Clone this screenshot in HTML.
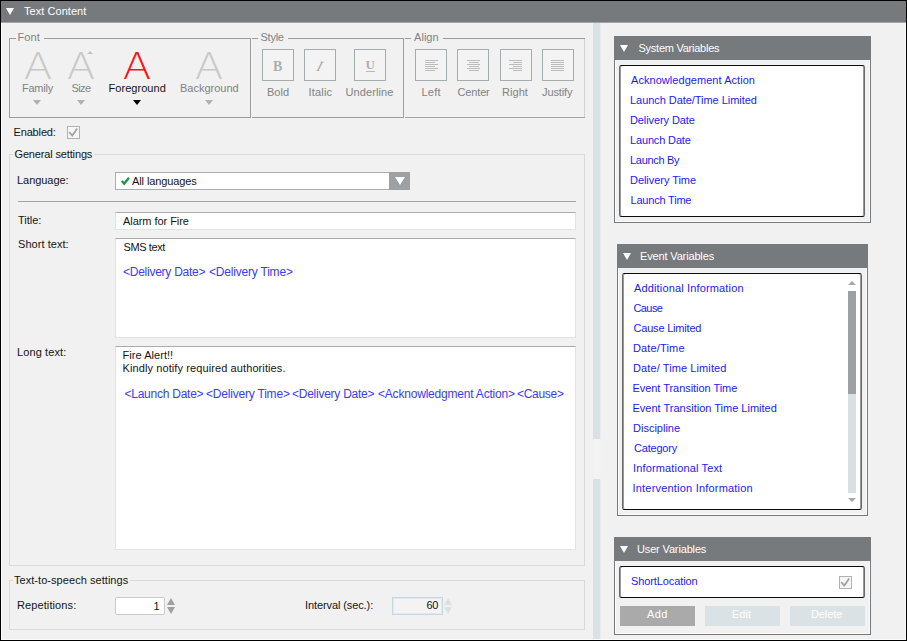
<!DOCTYPE html>
<html><head><meta charset="utf-8"><title>Text Content</title>
<style>
*{box-sizing:border-box;margin:0;padding:0}
html,body{width:907px;height:641px;overflow:hidden;background:#f1f1f1}
body{font-family:"Liberation Sans",sans-serif;font-size:11px;color:#141414;position:relative}
.a{position:absolute}
.t{position:absolute;white-space:nowrap;line-height:14px;font-size:11px}
.g{color:#808284}.k{color:#141414}.w{color:#fff}.l{color:#1a1af0}.b{color:#3a3afa;font-size:12px}
.tri{position:absolute;width:0;height:0;border-left:4.5px solid transparent;border-right:4.5px solid transparent;border-top:7.5px solid #fff}
.ln{position:absolute;background:#9c9c9c}
.btn{position:absolute;width:32px;height:32px;border:1px solid #a6abae;background:#f3f3f3}
.box{position:absolute;background:#fff;border:1px solid #dfe3e6;border-top-color:#a9adb0}
.hd{position:absolute;background:#767a7c}
.pn{position:absolute;border:1px solid #767a7c;box-shadow:inset 0 0 0 1px #fbfbfb}
.lb{position:absolute;background:#fff;border:1px solid #6a6a6a;border-top-color:#0c0c0c;border-bottom-color:#0c0c0c;border-radius:2.5px;box-shadow:inset 1px 0 0 #999,inset -1px 0 0 #999}
.dd{position:absolute;width:0;height:0;border-left:4.5px solid transparent;border-right:4.5px solid transparent;border-top:5px solid #b4b4b4}
.big{position:absolute;font-family:"DejaVu Sans Light","DejaVu Sans","Liberation Sans",sans-serif;font-weight:200;font-size:38px;line-height:44px;width:40px;text-align:center;transform:translateY(-0.4px) scaleX(1.1)}
svg{position:absolute;overflow:visible}
</style></head><body>

<div class="a" style="left:0;top:0;width:907px;height:641px;border:1px solid #000;z-index:9"></div>
<div class="a" style="left:1px;top:1px;width:905px;height:639px;border:1px solid #fbfbfb;border-top:none;z-index:8"></div>
<div class="hd" style="left:1px;top:1px;width:905px;height:21px;z-index:8"></div>
<div class="a" style="left:1px;top:22px;width:905px;height:1px;background:#a3a6a7;z-index:8"></div>
<div class="tri" style="left:6px;top:8px;z-index:10"></div>
<div class="a" style="left:593px;top:23px;width:7px;height:616px;background:#dae1e4"></div>
<div class="a" style="left:600px;top:23px;width:1px;height:616px;background:#e8ecee"></div>
<div class="a" style="left:593px;top:439px;width:8px;height:40px;background:#f3f3f3"></div>
<div class="ln" style="left:9px;top:38px;width:1px;height:80px;background:#9c9c9c"></div>
<div class="ln" style="left:9px;top:38px;width:7px;height:1px;background:#9c9c9c"></div>
<div class="ln" style="left:44px;top:38px;width:207px;height:1px;background:#9c9c9c"></div>
<div class="ln" style="left:9px;top:117px;width:242px;height:1px;background:#9c9c9c"></div>
<div class="ln" style="left:250px;top:38px;width:1px;height:80px;background:#9c9c9c"></div>
<div class="ln" style="left:252px;top:38px;width:6px;height:1px;background:#9c9c9c"></div>
<div class="ln" style="left:288px;top:38px;width:116px;height:1px;background:#9c9c9c"></div>
<div class="ln" style="left:252px;top:117px;width:152px;height:1px;background:#9c9c9c"></div>
<div class="ln" style="left:403px;top:38px;width:1px;height:80px;background:#9c9c9c"></div>
<div class="ln" style="left:405px;top:38px;width:6px;height:1px;background:#9c9c9c"></div>
<div class="ln" style="left:443px;top:38px;width:142px;height:1px;background:#9c9c9c"></div>
<div class="ln" style="left:405px;top:117px;width:180px;height:1px;background:#a6a6a6"></div>
<div class="ln" style="left:584px;top:39px;width:1px;height:78px;background:#d2d2d2"></div>
<div class="big" style="left:17.5px;top:44px;color:#c8c8c8">A</div>
<div class="big" style="left:61px;top:44px;color:#c8c8c8">A</div>
<div class="big" style="left:117.4px;top:44px;color:#ff1212">A</div>
<div class="big" style="left:189.4px;top:44px;color:#c8c8c8">A</div>
<div class="a" style="left:87px;top:51px;width:0;height:0;border-left:3.5px solid transparent;border-right:3.5px solid transparent;border-bottom:3.5px solid #c2c2c2"></div>
<div class="dd" style="left:33px;top:100px;border-top-color:#b2b2b2"></div>
<div class="dd" style="left:76.5px;top:100px;border-top-color:#b2b2b2"></div>
<div class="dd" style="left:133px;top:100px;border-top-color:#000"></div>
<div class="dd" style="left:205px;top:100px;border-top-color:#b2b2b2"></div>
<div class="btn" style="left:262px;top:49px"></div>
<div class="btn" style="left:304px;top:49px"></div>
<div class="btn" style="left:354px;top:49px"></div>
<div class="btn" style="left:415px;top:49px"></div>
<div class="btn" style="left:457px;top:49px"></div>
<div class="btn" style="left:500px;top:49px"></div>
<div class="btn" style="left:542px;top:49px"></div>
<div class="t" style="left:273px;top:59px;font:bold 14px/16px 'Liberation Serif',serif;color:#adadad">B</div>
<div class="t" style="left:317px;top:59px;font:italic 14px/16px 'Liberation Serif',serif;color:#a6a6a6;transform:skewX(-18deg)">I</div>
<div class="t" style="left:365.5px;top:57px;font:bold 13px/16px 'Liberation Serif',serif;color:#b0b0b0">U</div>
<div class="a" style="left:366px;top:71px;width:9px;height:1px;background:#b9b9b9"></div>
<div class="a" style="left:425px;top:60px;width:13px;height:1px;background:#bcbcbc"></div>
<div class="a" style="left:425px;top:62px;width:9.5px;height:1px;background:#bcbcbc"></div>
<div class="a" style="left:425px;top:64px;width:13px;height:1px;background:#bcbcbc"></div>
<div class="a" style="left:425px;top:66px;width:9.5px;height:1px;background:#bcbcbc"></div>
<div class="a" style="left:425px;top:68px;width:13px;height:1px;background:#bcbcbc"></div>
<div class="a" style="left:425px;top:70px;width:9.5px;height:1px;background:#bcbcbc"></div>
<div class="a" style="left:467.0px;top:60px;width:13px;height:1px;background:#bcbcbc"></div>
<div class="a" style="left:468.5px;top:62px;width:10px;height:1px;background:#bcbcbc"></div>
<div class="a" style="left:467.0px;top:64px;width:13px;height:1px;background:#bcbcbc"></div>
<div class="a" style="left:468.5px;top:66px;width:10px;height:1px;background:#bcbcbc"></div>
<div class="a" style="left:467.0px;top:68px;width:13px;height:1px;background:#bcbcbc"></div>
<div class="a" style="left:468.5px;top:70px;width:10px;height:1px;background:#bcbcbc"></div>
<div class="a" style="left:509px;top:60px;width:13px;height:1px;background:#bcbcbc"></div>
<div class="a" style="left:512.5px;top:62px;width:9.5px;height:1px;background:#bcbcbc"></div>
<div class="a" style="left:509px;top:64px;width:13px;height:1px;background:#bcbcbc"></div>
<div class="a" style="left:512.5px;top:66px;width:9.5px;height:1px;background:#bcbcbc"></div>
<div class="a" style="left:509px;top:68px;width:13px;height:1px;background:#bcbcbc"></div>
<div class="a" style="left:512.5px;top:70px;width:9.5px;height:1px;background:#bcbcbc"></div>
<div class="a" style="left:551px;top:60px;width:13px;height:1px;background:#bcbcbc"></div>
<div class="a" style="left:551px;top:62px;width:13px;height:1px;background:#bcbcbc"></div>
<div class="a" style="left:551px;top:64px;width:13px;height:1px;background:#bcbcbc"></div>
<div class="a" style="left:551px;top:66px;width:13px;height:1px;background:#bcbcbc"></div>
<div class="a" style="left:551px;top:68px;width:13px;height:1px;background:#bcbcbc"></div>
<div class="a" style="left:551px;top:70px;width:13px;height:1px;background:#bcbcbc"></div>
<div class="a" style="left:67px;top:126px;width:13px;height:13px;border:1px solid #aeb2b5;background:#f6f6f6"></div>
<svg style="left:67px;top:126px" width="13" height="13" viewBox="0 0 13 13"><path d="M2.2 6.2 L5.3 9.5 L10.2 2.4" fill="none" stroke="#9fa3a5" stroke-width="1.8"/></svg>
<div class="ln" style="left:9px;top:154px;width:1px;height:412px;background:#d9d9d9"></div>
<div class="ln" style="left:9px;top:154px;width:4px;height:1px;background:#d9d9d9"></div>
<div class="ln" style="left:94px;top:154px;width:491px;height:1px;background:#d9d9d9"></div>
<div class="ln" style="left:584px;top:154px;width:1px;height:412px;background:#d9d9d9"></div>
<div class="ln" style="left:9px;top:565px;width:576px;height:1px;background:#d9d9d9"></div>
<div class="a" style="left:115px;top:172px;width:295px;height:18px;background:#fff;border:1px solid #a9adb0"></div>
<div class="a" style="left:389px;top:172px;width:21px;height:18px;background:#9da1a3"></div>
<div class="a" style="left:394.5px;top:177px;width:0;height:0;border-left:5px solid transparent;border-right:5px solid transparent;border-top:8px solid #fff"></div>
<svg style="left:121px;top:177px" width="9" height="8" viewBox="0 0 9 8"><path d="M0.8 4 L3.2 6.6 L8 0.8" fill="none" stroke="#1f9a48" stroke-width="2.4"/></svg>
<div class="ln" style="left:18px;top:201px;width:558px;height:1px;background:#a2a2a2"></div>
<div class="box" style="left:115px;top:212px;width:461px;height:18px"></div>
<div class="box" style="left:115px;top:238px;width:461px;height:100px"></div>
<div class="box" style="left:115px;top:346px;width:461px;height:204px"></div>
<div class="ln" style="left:9px;top:580px;width:1px;height:50px;background:#d9d9d9"></div>
<div class="ln" style="left:9px;top:580px;width:4px;height:1px;background:#d9d9d9"></div>
<div class="ln" style="left:130px;top:580px;width:455px;height:1px;background:#d9d9d9"></div>
<div class="ln" style="left:584px;top:580px;width:1px;height:50px;background:#d9d9d9"></div>
<div class="ln" style="left:9px;top:629px;width:576px;height:1px;background:#d9d9d9"></div>
<div class="a" style="left:115px;top:597px;width:50px;height:18px;background:#fff;border:1px solid #cbcbcb;border-radius:2px"></div>
<div class="a" style="left:392px;top:597px;width:51px;height:18px;background:#f3f3f3;border:1px solid #c6d6e2;box-shadow:inset 0 0 0 1px #e3eaef"></div>
<div class="a" style="left:167px;top:598px;width:0;height:0;border-left:4px solid transparent;border-right:4px solid transparent;border-bottom:7px solid #9da1a3"></div>
<div class="a" style="left:167px;top:607px;width:0;height:0;border-left:4px solid transparent;border-right:4px solid transparent;border-top:7px solid #9da1a3"></div>
<div class="a" style="left:444.2px;top:598px;width:0;height:0;border-left:4px solid transparent;border-right:4px solid transparent;border-bottom:7px solid #d9e1e4"></div>
<div class="a" style="left:444.2px;top:607px;width:0;height:0;border-left:4px solid transparent;border-right:4px solid transparent;border-top:7px solid #d9e1e4"></div>
<div class="pn" style="left:614px;top:36px;width:257px;height:187px"></div>
<div class="hd" style="left:614px;top:36px;width:257px;height:24px"></div>
<div class="tri" style="left:620px;top:45px"></div>
<div class="lb" style="left:619px;top:65px;width:246px;height:152px"></div>
<div class="pn" style="left:617px;top:244px;width:251px;height:272px"></div>
<div class="hd" style="left:617px;top:244px;width:251px;height:24px"></div>
<div class="tri" style="left:623px;top:253px"></div>
<div class="lb" style="left:622px;top:273px;width:240px;height:237px"></div>
<div class="pn" style="left:614px;top:537px;width:257px;height:98px"></div>
<div class="hd" style="left:614px;top:537px;width:257px;height:24px"></div>
<div class="tri" style="left:620px;top:546px"></div>
<div class="lb" style="left:619px;top:566px;width:246px;height:32px"></div>
<div class="a" style="left:848px;top:291px;width:8px;height:202px;background:#d8e0e3"></div>
<div class="a" style="left:848px;top:291px;width:8px;height:103px;background:#9da1a3"></div>
<div class="a" style="left:848px;top:281px;width:0;height:0;border-left:4px solid transparent;border-right:4px solid transparent;border-bottom:4px solid #a4a8aa"></div>
<div class="a" style="left:848px;top:498px;width:0;height:0;border-left:4px solid transparent;border-right:4px solid transparent;border-top:4px solid #a4a8aa"></div>
<div class="a" style="left:839px;top:576px;width:13px;height:13px;border:1px solid #aeb2b5;background:#f6f6f6"></div>
<svg style="left:839px;top:576px" width="13" height="13" viewBox="0 0 13 13"><path d="M2.2 6.2 L5.3 9.5 L10.2 2.4" fill="none" stroke="#9fa3a5" stroke-width="1.8"/></svg>
<div class="a" style="left:620px;top:606px;width:75px;height:20px;background:#aaaaaa"></div>
<div class="a" style="left:705px;top:606px;width:75px;height:20px;background:#dbe2e5"></div>
<div class="a" style="left:790px;top:606px;width:75px;height:20px;background:#dbe2e5"></div>
<div class="t w" style="left:24.0px;top:4px;letter-spacing:0.05px;z-index:10">Text Content</div>
<div class="t g" style="left:17.5px;top:30px;letter-spacing:0.1px">Font</div>
<div class="t g" style="left:260.5px;top:30px;letter-spacing:-0.25px">Style</div>
<div class="t g" style="left:414.0px;top:30px;letter-spacing:0.05px">Align</div>
<div class="t g" style="left:22.0px;top:81px;letter-spacing:-0.25px">Family</div>
<div class="t g" style="left:71.5px;top:81px;letter-spacing:-0.6px">Size</div>
<div class="t k" style="left:108.5px;top:81px;letter-spacing:0.05px">Foreground</div>
<div class="t g" style="left:180.0px;top:81px">Background</div>
<div class="t g" style="left:267.0px;top:85px">Bold</div>
<div class="t g" style="left:308.5px;top:85px;letter-spacing:0.2px">Italic</div>
<div class="t g" style="left:345.5px;top:85px;letter-spacing:0.1px">Underline</div>
<div class="t g" style="left:421.5px;top:85px;letter-spacing:0.25px">Left</div>
<div class="t g" style="left:457.5px;top:85px;letter-spacing:-0.15px">Center</div>
<div class="t g" style="left:502.0px;top:85px;letter-spacing:0.05px">Right</div>
<div class="t g" style="left:542.0px;top:85px;letter-spacing:-0.1px">Justify</div>
<div class="t k" style="left:13.5px;top:125px;letter-spacing:-0.15px">Enabled:</div>
<div class="t k" style="left:14.5px;top:147px;letter-spacing:-0.15px">General settings</div>
<div class="t k" style="left:17.0px;top:173px;letter-spacing:-0.05px">Language:</div>
<div class="t k" style="left:132.0px;top:174px;letter-spacing:-0.1px">All languages</div>
<div class="t k" style="left:18.0px;top:213px">Title:</div>
<div class="t k" style="left:123.0px;top:214px;letter-spacing:-0.05px">Alarm for Fire</div>
<div class="t k" style="left:18.0px;top:237px;letter-spacing:0.05px">Short text:</div>
<div class="t k" style="left:123.5px;top:240px;letter-spacing:-0.4px">SMS text</div>
<div class="t b" style="left:123.0px;top:265px;letter-spacing:-0.25px">&lt;Delivery Date&gt;</div>
<div class="t b" style="left:209.0px;top:265px;letter-spacing:-0.2px">&lt;Delivery Time&gt;</div>
<div class="t k" style="left:17.0px;top:345px;letter-spacing:0.1px">Long text:</div>
<div class="t k" style="left:122.5px;top:348px;letter-spacing:0.05px">Fire Alert!!</div>
<div class="t k" style="left:122.5px;top:361px;letter-spacing:0.1px">Kindly notify required authorities.</div>
<div class="t b" style="left:124.5px;top:387px;letter-spacing:-0.25px">&lt;Launch Date&gt;</div>
<div class="t b" style="left:206.0px;top:387px;letter-spacing:-0.2px">&lt;Delivery Time&gt;</div>
<div class="t b" style="left:292.0px;top:387px;letter-spacing:-0.25px">&lt;Delivery Date&gt;</div>
<div class="t b" style="left:378.0px;top:387px;letter-spacing:-0.2px">&lt;Acknowledgment Action&gt;</div>
<div class="t b" style="left:517.0px;top:387px;letter-spacing:-0.3px">&lt;Cause&gt;</div>
<div class="t k" style="left:14.0px;top:573px;letter-spacing:0.05px">Text-to-speech settings</div>
<div class="t k" style="left:17.0px;top:598px;letter-spacing:0.1px">Repetitions:</div>
<div class="t k" style="left:153.5px;top:599px">1</div>
<div class="t k" style="left:305.0px;top:598px;letter-spacing:-0.1px">Interval (sec.):</div>
<div class="t k" style="left:426.5px;top:598px;letter-spacing:-0.4px">60</div>
<div class="t w" style="left:638.5px;top:41px;letter-spacing:-0.25px">System Variables</div>
<div class="t l" style="left:631.0px;top:73px;letter-spacing:0.05px">Acknowledgement Action</div>
<div class="t l" style="left:630.0px;top:93px;letter-spacing:-0.05px">Launch Date/Time Limited</div>
<div class="t l" style="left:630.0px;top:113px;letter-spacing:-0.1px">Delivery Date</div>
<div class="t l" style="left:630.0px;top:133px;letter-spacing:-0.15px">Launch Date</div>
<div class="t l" style="left:630.0px;top:153px;letter-spacing:-0.3px">Launch By</div>
<div class="t l" style="left:630.0px;top:173px;letter-spacing:-0.05px">Delivery Time</div>
<div class="t l" style="left:630.5px;top:193px;letter-spacing:-0.2px">Launch Time</div>
<div class="t w" style="left:640.0px;top:249px;letter-spacing:-0.15px">Event Variables</div>
<div class="t l" style="left:634.0px;top:281px;letter-spacing:0.15px">Additional Information</div>
<div class="t l" style="left:633.5px;top:301px;letter-spacing:-0.6px">Cause</div>
<div class="t l" style="left:633.5px;top:321px;letter-spacing:-0.2px">Cause Limited</div>
<div class="t l" style="left:633.0px;top:341px;letter-spacing:0.15px">Date/Time</div>
<div class="t l" style="left:633.0px;top:361px;letter-spacing:0.1px">Date/ Time Limited</div>
<div class="t l" style="left:632.5px;top:381px;letter-spacing:-0.05px">Event Transition Time</div>
<div class="t l" style="left:632.5px;top:401px">Event Transition Time Limited</div>
<div class="t l" style="left:633.0px;top:421px">Discipline</div>
<div class="t l" style="left:634.0px;top:441px;letter-spacing:-0.2px">Category</div>
<div class="t l" style="left:633.0px;top:461px;letter-spacing:0.15px">Informational Text</div>
<div class="t l" style="left:632.5px;top:481px;letter-spacing:0.2px">Intervention Information</div>
<div class="t w" style="left:637.0px;top:542px;letter-spacing:-0.15px">User Variables</div>
<div class="t l" style="left:631.0px;top:574px;letter-spacing:-0.1px">ShortLocation</div>
<div class="t w" style="left:647.0px;top:607px;letter-spacing:0.4px">Add</div>
<div class="t w" style="left:732.0px;top:607px">Edit</div>
<div class="t w" style="left:811.0px;top:607px;letter-spacing:-0.1px">Delete</div>
</body></html>
